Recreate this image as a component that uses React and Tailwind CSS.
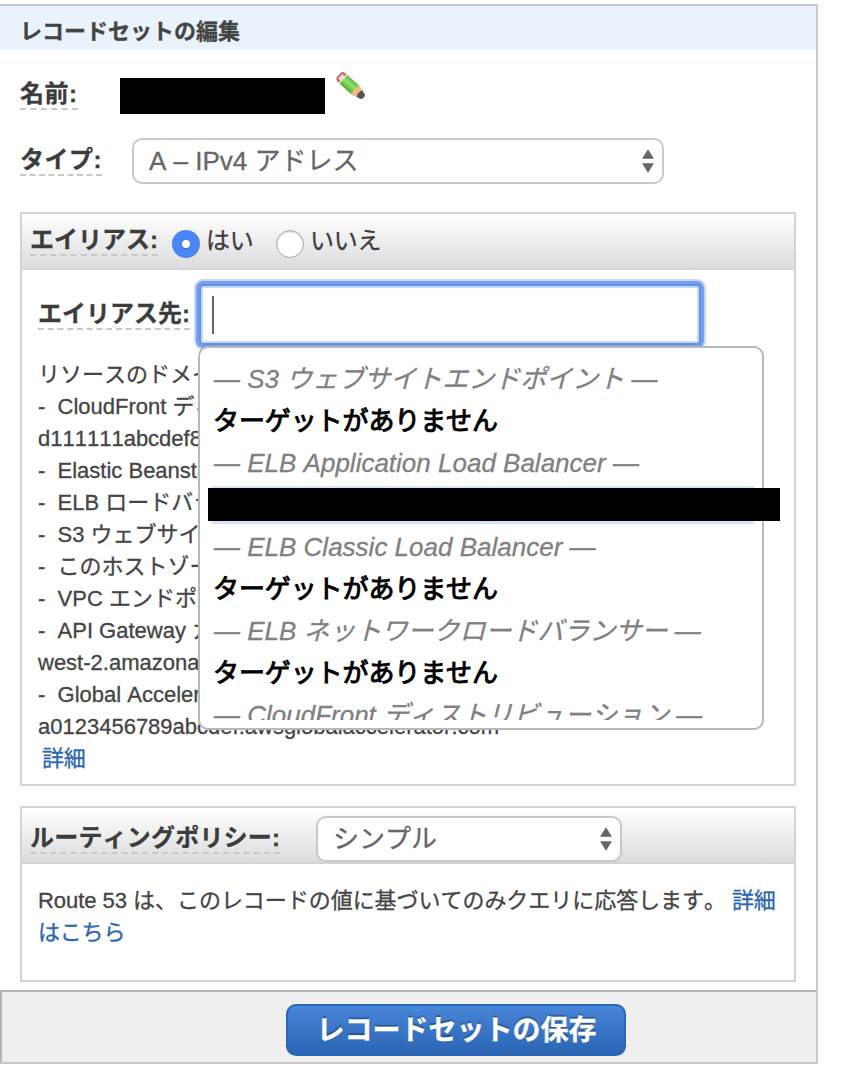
import React, { useState } from 'react';
import clsx from 'clsx';

const helpLines = [
  'リソースのドメイン名を入力',
  '-  CloudFront ディストリビューション',
  'd111111abcdef8.cloudfront.net',
  '-  Elastic Beanstalk 環境',
  '-  ELB ロードバランサー',
  '-  S3 ウェブサイト',
  '-  このホストゾーン',
  '-  VPC エンドポイント',
  '-  API Gateway カスタム',
  'west-2.amazonaws.com',
  '-  Global Accelerator',
  'a0123456789abcdef.awsglobalaccelerator.com',
];

const targets = [
  { type: 'group', label: '— S3 ウェブサイトエンドポイント —' },
  { type: 'empty', label: 'ターゲットがありません' },
  { type: 'group', label: '— ELB Application Load Balancer —' },
  { type: 'masked' },
  { type: 'group', label: '— ELB Classic Load Balancer —' },
  { type: 'empty', label: 'ターゲットがありません' },
  { type: 'group', label: '— ELB ネットワークロードバランサー —' },
  { type: 'empty', label: 'ターゲットがありません' },
  { type: 'group', label: '— CloudFront ディストリビューション —' },
];

const Label = ({ children, className }) => (
  <span
    className={clsx(
      'block h-[30px] shrink-0 whitespace-nowrap border-b-2 border-dashed border-[#c8c8c8] text-[24px] font-bold leading-[27px] text-[#3c3c3c]',
      className
    )}
  >
    {children}
  </span>
);

const SelectBox = ({ value, className }) => (
  <button
    type="button"
    className={clsx(
      'flex h-[46px] shrink-0 items-center justify-between rounded-[10px] border-2 border-[#c8c8c8] bg-white pl-[15px] pr-2 text-[26px] leading-[42px] text-[#666]',
      className
    )}
  >
    <span>{value}</span>
    <svg width="12" height="24" viewBox="0 0 12 24" fill="#666">
      <path d="M6 0.300l6 9.500H0z" />
      <path d="M6 23.700l6-9.500H0z" />
    </svg>
  </button>
);

const Radio = ({ checked, onChange, label }) => (
  <button type="button" onClick={onChange} className="flex items-start gap-1.5">
    <span
      className={clsx(
        'mt-4 flex h-7 w-7 items-center justify-center rounded-full',
        checked ? 'bg-[#4a87f4]' : 'border border-[#aaa] bg-white shadow-[inset_0_1px_2px_rgba(0,0,0,0.2)]'
      )}
    >
      {checked && <span className="h-2 w-2 rounded-full bg-white shadow-[0_1px_2px_rgba(0,0,0,0.3)]" />}
    </span>
    <span className="mt-[13px] text-[24px] leading-[28px] tracking-[-0.3px] text-[#3c3c3c]">{label}</span>
  </button>
);

const PencilIcon = () => (
  <svg width="30" height="31" viewBox="0 0 30 31" className="ml-[11px] mt-[21px] blur-[0.5px]">
    <defs>
      <linearGradient id="pencilBody" x1="0" y1="0" x2="0" y2="1">
        <stop offset="0" stopColor="#62bd40" />
        <stop offset="0.45" stopColor="#8ee468" />
        <stop offset="1" stopColor="#55a934" />
      </linearGradient>
    </defs>
    <g transform="translate(5.5 6.500) rotate(42) scale(0.92 0.9)">
      <path d="M0-6.300h3v12.600H0a4 4 0 0 1-4-4v-4.600a4 4 0 0 1 4-4z" fill="#cf6a60" />
      <path d="M-2-3.500h5v7h-5z" fill="#f2dcd8" />
      <path d="M1.500-6.500h2v13h-2z" fill="#dfe3df" />
      <path d="M3-6.500h17v13H3z" fill="url(#pencilBody)" />
      <path d="M19-6.500h2L28.500-4a4 4 0 0 1 0 8L21 6.500h-2q1.500-3 0-6.500 1.500-3.500 0-6.500z" fill="#f0b780" />
      <path d="M26-4.800l2.500 0.800a4 4 0 0 1 0 8l-2.500 0.800q-2-4.800 0-9.600z" fill="#555" />
    </g>
  </svg>
);

const TargetMenu = () => (
  <div className="absolute left-[-3px] top-[60px] z-10 h-[384px] w-[566px] rounded-[10px] border-2 border-[#b8b8b8] bg-white pl-2 pt-2.5">
    <ul className="h-[362px] w-[572px] overflow-hidden pl-1 text-[26px] leading-[42px]">
      {targets.map((t, i) => (
        <li key={i} className="h-[42px] whitespace-nowrap">
          {t.type === 'group' && <span className="block pl-0.5 italic text-[#808080]">{t.label}</span>}
          {t.type === 'empty' && (
            <span className="block pl-px tracking-[-0.1px] text-black [-webkit-text-stroke:1px_black]">{t.label}</span>
          )}
          {t.type === 'masked' && (
            <div className="pt-0.5">
              <div className="h-[38px] w-[542px] bg-[#d8e2fb] pt-0.5">
                <div className="-ml-1 h-[33px] w-[572px] bg-black" />
              </div>
            </div>
          )}
        </li>
      ))}
    </ul>
  </div>
);

export default function App() {
  const [alias, setAlias] = useState(true);

  return (
    <div className="h-[1074px] w-[844px] bg-white pt-1 font-['Liberation_Sans','Noto_Sans_CJK_JP',sans-serif] [-webkit-text-stroke:0.3px] [font-kerning:none]">
      <div className="flex h-[1060px] w-[818px] flex-col border-y-2 border-r-2 border-[#c8c8c8]">
        <h1 className="h-11 shrink-0 bg-[#eaf2fc] pl-5 pt-[5px] text-[22px] font-bold leading-[42px] text-[#444]">
          レコードセットの編集
        </h1>

        <div className="flex grow flex-col px-5">
          {/* Name */}
          <div className="flex h-[88px] shrink-0 items-start">
            <Label className="mt-[30px] w-[58px] tracking-[0.5px]">名前:</Label>
            <div className="ml-[42px] mt-7 h-9 w-[205px] bg-black" />
            <PencilIcon />
          </div>

          {/* Type */}
          <div className="flex h-[74px] shrink-0 items-start">
            <Label className="mt-2 w-[82px] tracking-[0.5px]">タイプ:</Label>
            <SelectBox value="A – IPv4 アドレス" className="ml-[30px] w-[532px]" />
          </div>

          {/* Alias */}
          <section className="h-[574px] shrink-0 border-2 border-[#d4d4d4]">
            <div className="flex h-14 items-start border-b-2 border-[#d4d4d4] bg-linear-to-b from-white to-[#dcdcde] pl-2">
              <Label className="mr-3.5 mt-3 w-[128px]">エイリアス:</Label>
              <div className="flex gap-[22.6px]">
                <Radio checked={alias} onChange={() => setAlias(true)} label="はい" />
                <Radio checked={!alias} onChange={() => setAlias(false)} label="いいえ" />
              </div>
            </div>

            <div className="px-4">
              <div className="flex h-[89px] items-start">
                <Label className="mt-[30px] w-[152px]">エイリアス先:</Label>
                <div className="relative ml-[11px] mt-4">
                  <div className="-ml-[5px] -mt-[5px] h-[67px] w-[508px] rounded-[7px] border-[5px] border-[#759ff0] shadow-[0_0_0_2px_#c6d8fa]">
                    <div className="h-full rounded-[3px] border-2 border-[#c6d8fa] pl-[9px] pt-2 shadow-[0_0_0_2px_#6590e0]">
                      <div className="h-[38px] w-0.5 bg-[#666]" />
                    </div>
                  </div>
                  <TargetMenu />
                </div>
              </div>

              <div className="text-[22px] leading-[32px] text-[#444]">
                {helpLines.map((line) => (
                  <p key={line} className="h-8 whitespace-pre">{line}</p>
                ))}
                <a className="block pl-1 tracking-[-0.2px] text-[#2a66b0]">詳細</a>
              </div>
            </div>
          </section>

          {/* Routing policy */}
          <section className="mt-5 h-[176px] shrink-0 border-2 border-[#d4d4d4]">
            <div className="flex h-14 items-start border-b-2 border-[#d4d4d4] bg-linear-to-b from-white to-[#dcdcde] pl-2">
              <Label className="mt-4 w-[250px] tracking-[0.2px]">ルーティングポリシー:</Label>
              <SelectBox value="シンプル" className="ml-9 mt-2 w-[306px]" />
            </div>
            <p className="px-4 pt-[21px] text-[22px] leading-[32px] tracking-[-0.04px] text-[#444]">
              Route 53 は、このレコードの値に基づいてのみクエリに応答します。{' '}
              <a className="tracking-[-0.2px] text-[#2a66b0]">詳細<br />はこちら</a>
            </p>
          </section>
        </div>

        <div className="flex h-[72px] shrink-0 border-l-2 border-t-2 border-[#b5b5b5] bg-[#efefef] pl-[284px] pt-3">
          <button
            type="button"
            className="h-[52px] w-[340px] rounded-[10px] border-2 border-[#2a66b8] bg-linear-to-b from-[#4886d8] to-[#2b65b4] pl-px pt-0.5 text-[28px] font-bold leading-[46px] text-white [text-shadow:0_-2px_1px_rgba(0,0,0,0.3)]"
          >
            レコードセットの保存
          </button>
        </div>
      </div>
    </div>
  );
}
